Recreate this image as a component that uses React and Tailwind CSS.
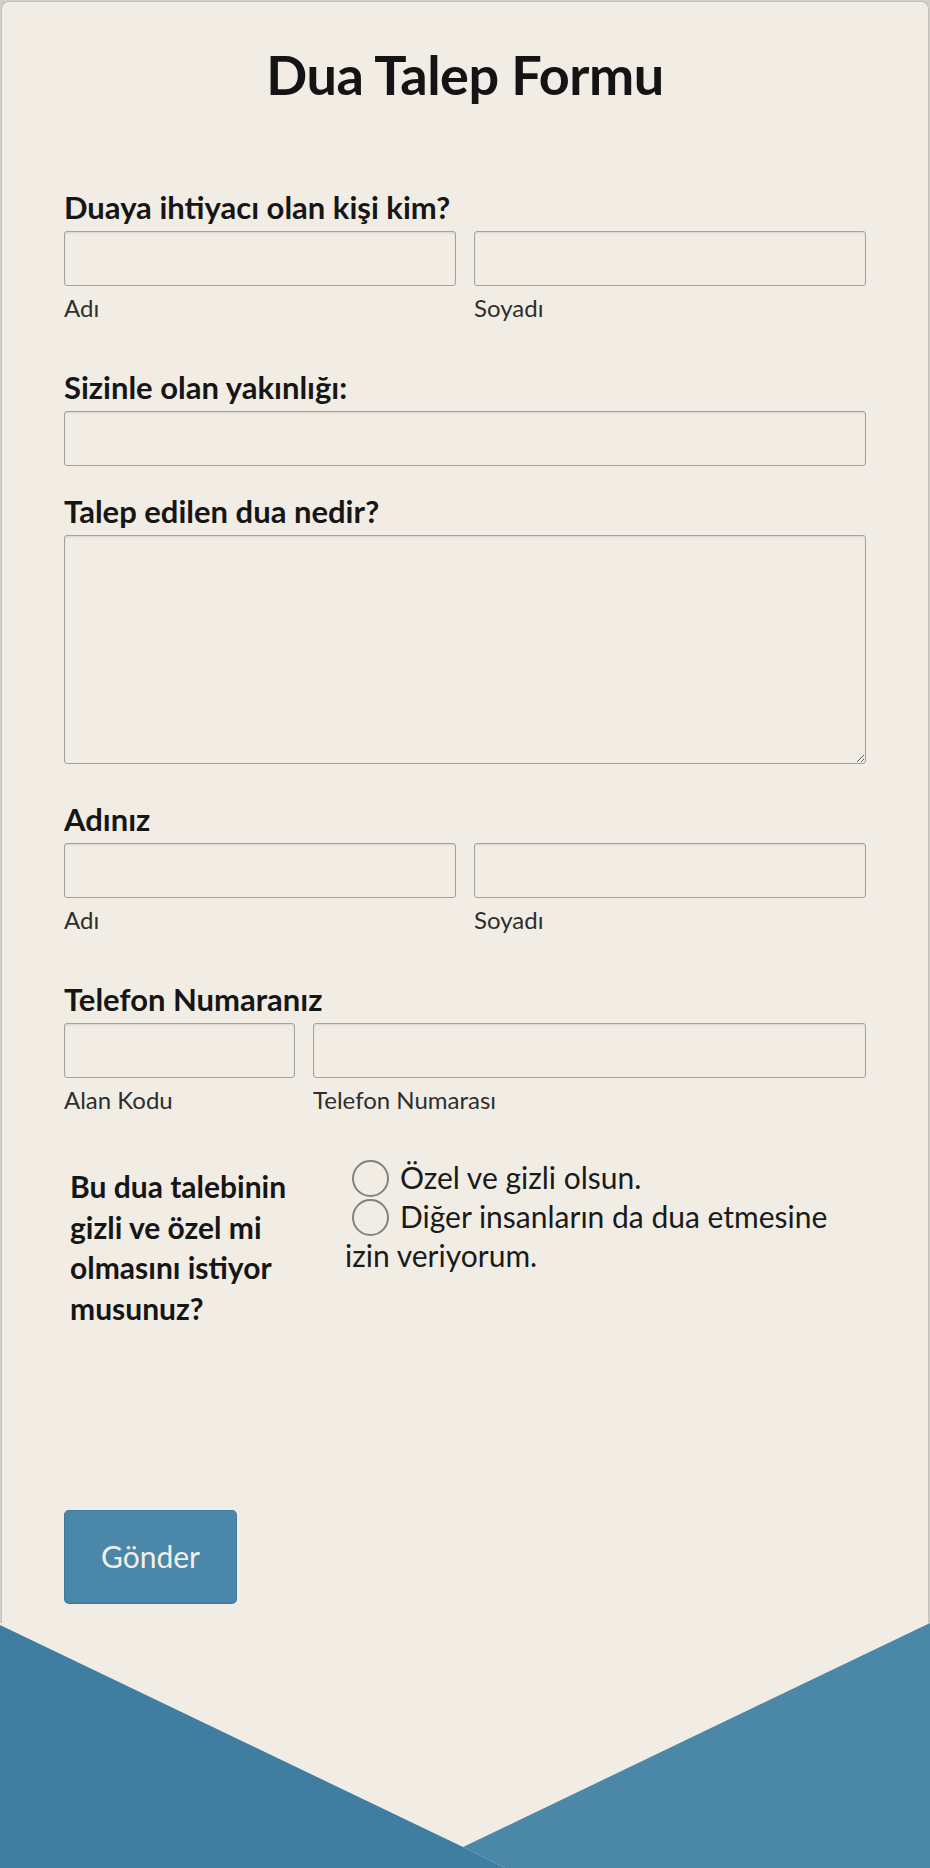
import React from 'react';

const font = { fontFamily: 'Lato, "Open Sans", "Liberation Sans", sans-serif' };

const inputCls = 'block w-full h-[55px] rounded-[3px] border border-[#a5a29b] bg-transparent shadow-[inset_0_1px_2px_rgba(0,0,0,0.10)] outline-none';

function FieldLabel({ children, className = '' }) {
  return (
    <label className={`block text-[31px] leading-[31px] font-bold text-[#161616] ${className}`}>
      {children}
    </label>
  );
}

function SubLabel({ children }) {
  return <span className="block mt-[10px] text-[24px] leading-[24px] text-[#2e2e2e]">{children}</span>;
}

function Radio() {
  return (
    <span className="inline-block w-[37px] h-[37px] rounded-full border-2 border-[#848280] align-[-8px] ml-[7px] mr-[11px]" />
  );
}

export default function App() {
  return (
    <div className="min-h-[1868px] bg-[#d2cfc8] pt-[1px] px-[1px]" style={font}>
      <div className="rounded-t-[8px] border border-b-0 border-[#c6c2ba] bg-[#f1ede5] px-[62px] pt-[46px] pb-[19px]">
        <h1 className="text-center text-[54px] leading-[54px] font-bold tracking-[-0.5px] text-[#141414]">Dua Talep Formu</h1>

        {/* Duaya ihtiyacı olan kişi */}
        <FieldLabel className="mt-[90px]">Duaya ihtiyacı olan kişi kim?</FieldLabel>
        <div className="mt-[8px] grid grid-cols-2 gap-x-[18px]">
          <div>
            <input className={inputCls} />
            <SubLabel>Adı</SubLabel>
          </div>
          <div>
            <input className={inputCls} />
            <SubLabel>Soyadı</SubLabel>
          </div>
        </div>

        <FieldLabel className="mt-[52px]">Sizinle olan yakınlığı:</FieldLabel>
        <input className={`${inputCls} mt-[8px] h-[54px]`} />

        <FieldLabel className="mt-[30px]">Talep edilen dua nedir?</FieldLabel>
        <textarea className="mt-[8px] block w-full h-[229px] rounded-[3px] border border-[#a5a29b] bg-transparent shadow-[inset_0_1px_2px_rgba(0,0,0,0.10)] outline-none resize-y" />

        <FieldLabel className="mt-[40px]">Adınız</FieldLabel>
        <div className="mt-[8px] grid grid-cols-2 gap-x-[18px]">
          <div>
            <input className={inputCls} />
            <SubLabel>Adı</SubLabel>
          </div>
          <div>
            <input className={inputCls} />
            <SubLabel>Soyadı</SubLabel>
          </div>
        </div>

        <FieldLabel className="mt-[52px]">Telefon Numaranız</FieldLabel>
        <div className="mt-[8px] grid grid-cols-[231px_1fr] gap-x-[18px]">
          <div>
            <input className={`${inputCls} h-[54px]`} />
            <SubLabel>Alan Kodu</SubLabel>
          </div>
          <div>
            <input className={`${inputCls} h-[54px]`} />
            <SubLabel>Telefon Numarası</SubLabel>
          </div>
        </div>

        {/* Gizlilik tercihi */}
        <div className="mt-[46px] flex items-start">
          <div className="w-[281px] shrink-0 pl-[6px] pr-[20px] pt-[8px] text-[30px] leading-[40.5px] font-bold text-[#161616]">
            Bu dua talebinin gizli ve özel mi olmasını istiyor musunuz?
          </div>
          <div className="flex-1 text-[30px] leading-[39px] text-[#1a1a1a]">
            <div>
              <Radio />Özel ve gizli olsun.
            </div>
            <div>
              <Radio />Diğer insanların da dua etmesine izin veriyorum.
            </div>
          </div>
        </div>

        <button className="mt-[182px] w-[173px] h-[94px] rounded-[5px] border border-[#3e7b9c] border-b-2 bg-[#4a87a8] text-[30px] text-[#f3efe8]">
          Gönder
        </button>
      </div>

      <svg width="930" height="245" viewBox="0 0 930 245" className="block -mx-[1px]">
        <rect x="0" y="0" width="930" height="245" fill="#f1ede5" />
        <polygon points="463,224 930,0 930,245 505,245" fill="#4b88a8" />
        <polygon points="0,2 463,224 505,245 0,245" fill="#3f7ea0" />
      </svg>
    </div>
  );
}
